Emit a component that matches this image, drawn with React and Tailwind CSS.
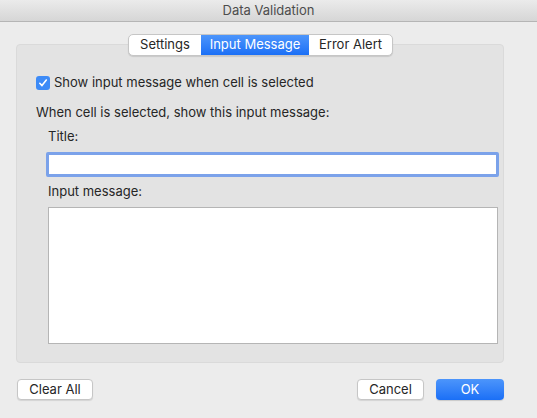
export default function App() {
  const tabs = ['Settings', 'Input Message', 'Error Alert']
  const active = 'Input Message'

  return (
    <div className="w-[537px] h-[418px] bg-[#ececec] flex flex-col text-[13px] text-[#262626]" style={{ fontFamily: 'Inter, "Liberation Sans", Arial, sans-serif' }}>
      {/* Title bar */}
      <div className="h-[22px] shrink-0 flex items-center justify-center bg-gradient-to-b from-[#ebebeb] to-[#d6d6d6] border-b border-[#b5b5b5] text-[#4d4d4d]">
        Data Validation
      </div>

      <div className="relative flex-1 flex flex-col px-4 pt-[22px]">
        {/* Tabs */}
        <div className="absolute left-[128px] top-[12px] z-10 flex h-[22px] rounded-[5px] border border-[#c6c6c6] bg-white shadow-[0_1px_1px_rgba(0,0,0,0.12)] overflow-hidden">
          {tabs.map(t => (
            <div
              key={t}
              className={`flex items-center justify-center ${
                t === 'Settings' ? 'w-[72px]' : t === 'Input Message' ? 'w-[108px]' : 'w-[83px]'
              } ${t === active ? 'bg-gradient-to-b from-[#4c95fb] to-[#1a6ff6] text-white' : 'text-[#262626]'}`}
            >
              {t}
            </div>
          ))}
        </div>

        {/* Panel */}
        <div className="h-[319px] w-[488px] rounded-[4px] bg-[#e3e3e3] border border-[#dadada] pt-[30px] pl-[19px] pr-[6px] flex flex-col">
          <label className="flex items-center gap-[4px] h-[16px]">
            <span className="w-[14px] h-[14px] rounded-[3px] bg-[#3d8bf7] flex items-center justify-center">
              <svg width="10" height="10" viewBox="0 0 10 10" fill="none">
                <path d="M1.8 5.3 L4 7.6 L8.3 2" stroke="white" strokeWidth="1.6" strokeLinecap="round" strokeLinejoin="round" />
              </svg>
            </span>
            <span>Show input message when cell is selected</span>
          </label>

          <div className="mt-[14px] h-[16px] flex items-center">When cell is selected, show this input message:</div>

          <div className="mt-[8px] ml-[12px] h-[16px] flex items-center">Title:</div>

          <div className="mt-[7px] ml-[10px] w-[453px] h-[25px] rounded-[2px] border-[3px] border-[#7ba2ea] bg-white"></div>

          <div className="mt-[7px] ml-[12px] h-[16px] flex items-center">Input message:</div>

          <div className="mt-[7px] ml-[12px] w-[450px] h-[137px] border border-[#b5b5b5] bg-white"></div>
        </div>

        {/* Buttons */}
        <div className="mt-[16px] flex items-center">
          <button className="ml-[1px] w-[76px] h-[21px] rounded-[4px] bg-white border border-[#c6c6c6] shadow-[0_1px_1px_rgba(0,0,0,0.1)] text-[#262626]">Clear All</button>
          <div className="flex-1"></div>
          <button className="w-[67px] h-[21px] rounded-[4px] bg-white border border-[#c6c6c6] shadow-[0_1px_1px_rgba(0,0,0,0.1)] text-[#262626]">Cancel</button>
          <button className="ml-[12px] mr-[17px] w-[68px] h-[21px] rounded-[4px] bg-gradient-to-b from-[#4c95fb] to-[#1a6ff6] text-white shadow-[0_1px_1px_rgba(0,0,0,0.15)]">OK</button>
        </div>
      </div>
    </div>
  )
}
